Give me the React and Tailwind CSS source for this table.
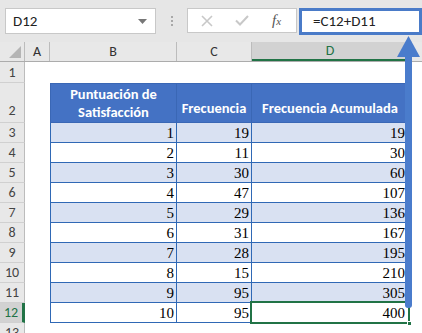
import React from "react";

const B = [1, 2, 3, 4, 5, 6, 7, 8, 9, 10];
const C = [19, 11, 30, 47, 29, 31, 28, 15, 95, 95];
const D = [19, 30, 60, 107, 136, 167, 195, 210, 305, 400];

const ui = { fontFamily: "Carlito, Lato, 'Open Sans', sans-serif" };
const num = { fontFamily: "'Liberation Serif', serif" };

function RowHeader({ n, h, selected, bottom }) {
  return (
    <div
      className={`w-[25px] shrink-0 flex justify-center border-b border-[#d0d0d0] text-[14px] ${
        selected
          ? "bg-[#d2d2d2] text-[#217346] border-r-[3px] border-r-[#217346]"
          : "bg-[#e8e8e8] text-[#444] border-r border-r-[#bcbcbc]"
      } ${bottom ? "items-end pb-[1px]" : "items-center"}`}
      style={{ height: h }}
    >
      {n}
    </div>
  );
}

export default function App() {
  return (
    <div className="w-[422px] h-[333px] overflow-hidden bg-white relative" style={ui}>
      {/* formula bar */}
      <div className="h-[42px] bg-[#e6e6e6] flex items-start pt-[8px]">
        <div className="ml-[5px] w-[151px] h-[26px] bg-white border border-[#c8c8c8] flex items-center justify-between pl-[7px] pr-[8px] text-[15px] text-[#222]">
          <span>D12</span>
          <svg width="9" height="5" viewBox="0 0 9 5">
            <polygon points="0,0 9,0 4.5,5" fill="#777" />
          </svg>
        </div>
        <div className="w-[31px] h-[26px] flex flex-col items-center justify-center gap-[2px]">
          <div className="w-[2px] h-[2px] bg-[#a8a8a8]" />
          <div className="w-[2px] h-[2px] bg-[#a8a8a8]" />
          <div className="w-[2px] h-[2px] bg-[#a8a8a8]" />
        </div>
        <div className="w-[110px] h-[25px] bg-white border border-[#c8c8c8] flex items-center">
          <svg className="ml-[13px]" width="12" height="12" viewBox="0 0 12 12">
            <path d="M1 1 L11 11 M11 1 L1 11" stroke="#c8c8c8" strokeWidth="1.6" />
          </svg>
          <svg className="ml-[22px]" width="14" height="11" viewBox="0 0 14 11">
            <path d="M1 5.5 L5 9.5 L13 1" stroke="#c8c8c8" strokeWidth="2" fill="none" />
          </svg>
          <span className="ml-[23px] text-[15px] italic text-[#555]" style={{ fontFamily: "'Liberation Serif', serif" }}>
            f<span className="text-[11px]">x</span>
          </span>
        </div>
        <div className="ml-[2px] w-[123px] h-[27px] bg-white border-[3px] border-[#4a7bc8] flex items-center pl-[11px] text-[15px] text-[#222]">
          =C12+D11
        </div>
      </div>

      {/* column headers */}
      <div className="flex h-[20px] bg-[#e8e8e8] border-b border-[#acacac] text-[14px] text-[#333]">
        <div className="w-[25px] shrink-0 relative border-r border-[#bcbcbc]">
          <svg className="absolute right-[3px] bottom-[3px]" width="12" height="12" viewBox="0 0 12 12">
            <polygon points="12,0 12,12 0,12" fill="#b5b5b5" />
          </svg>
        </div>
        <div className="w-[25px] shrink-0 flex items-center justify-center border-r border-[#bcbcbc]">A</div>
        <div className="w-[127px] shrink-0 flex items-center justify-center border-r border-[#bcbcbc]">B</div>
        <div className="w-[75px] shrink-0 flex items-center justify-center border-r border-[#bcbcbc]">C</div>
        <div className="w-[157px] shrink-0 flex items-center justify-center bg-[#d2d2d2] text-[#217346] border-b-[2px] border-[#217346] border-r border-r-[#bcbcbc]">
          D
        </div>
        <div className="flex-1" />
      </div>

      {/* row 1 */}
      <div className="flex">
        <RowHeader n={1} h={21} />
        <div className="flex-1" />
      </div>

      {/* row 2 header */}
      <div className="flex">
        <RowHeader n={2} h={40} bottom />
        <div className="w-[25px] shrink-0" />
        <div className="w-[127px] shrink-0 h-[40px] bg-[#4472c4] border border-[#3a67b5] flex items-end justify-center pb-[1px] text-white font-bold text-[14.5px] leading-[18px] text-center">
          Puntuación de
          <br />
          Satisfacción
        </div>
        <div className="w-[75px] shrink-0 h-[40px] bg-[#4472c4] border-y border-r border-[#3a67b5] flex items-end justify-center pb-[2px] text-white font-bold text-[14.5px]">
          Frecuencia
        </div>
        <div className="w-[157px] shrink-0 h-[40px] bg-[#4472c4] border-y border-r border-[#3a67b5] flex items-end justify-center pb-[2px] text-white font-bold text-[14.5px]">
          Frecuencia Acumulada
        </div>
        <div className="flex-1" />
      </div>

      {B.map((b, i) => {
        const band = i % 2 === 0 ? "bg-[#d9e1f2]" : "bg-white";
        const last = i === B.length - 1;
        return (
          <div className="flex" key={i}>
            <RowHeader n={i + 3} h={20} selected={last} />
            <div className="w-[25px] shrink-0" />
            <div className={`w-[127px] shrink-0 h-[20px] ${band} border-x border-b border-[#2f68b5] flex items-end justify-end pr-[2px] text-[15px] leading-[18px] text-black`} style={num}>
              {b}
            </div>
            <div className={`w-[75px] shrink-0 h-[20px] ${band} border-r border-b border-[#2f68b5] flex items-end justify-end pr-[2px] text-[15px] leading-[18px] text-black`} style={num}>
              {C[i]}
            </div>
            <div className={`w-[157px] shrink-0 h-[20px] ${band} border-r border-b border-[#2f68b5] flex items-end justify-end pr-[3px] text-[15px] leading-[18px] text-black relative`} style={num}>
              {D[i]}
              {last && (
                <>
                  <div className="absolute left-[-2px] top-[-2px] right-[-2px] bottom-[-2px] border-[2px] border-[#217346]" />
                  <div className="absolute right-[-4px] bottom-[-4px] w-[5px] h-[5px] bg-[#217346] border border-white" />
                </>
              )}
            </div>
            <div className="flex-1" />
          </div>
        );
      })}

      {/* row 13 */}
      <div className="flex">
        <RowHeader n={13} h={20} />
        <div className="flex-1" />
      </div>

      {/* arrow */}
      <svg className="absolute left-[397px] top-[36px]" width="24" height="275" viewBox="0 0 24 275">
        <rect x="8" y="18" width="7" height="254" rx="3" fill="#4a7ccc" />
        <polygon points="11.5,0 0,21 23,21" fill="#4a7ccc" />
      </svg>
    </div>
  );
}
